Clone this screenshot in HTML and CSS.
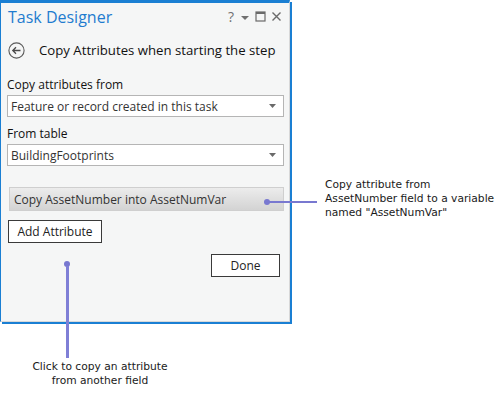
FILE: index.html
```html
<!DOCTYPE html>
<html>
<head>
<meta charset="utf-8">
<link rel="stylesheet" href="styles.css">
</head>
<body>
<div class="canvas">
  <div class="panel">
    <div class="titlebar">
      <span class="title">Task Designer</span>
      <div class="win-icons">
        <span class="help">?</span>
        <svg width="10" height="10" viewBox="0 0 10 10"><path d="M1 4 L9 4 L5 8 Z" fill="#707070"/></svg>
        <svg width="11" height="11" viewBox="0 0 11 11"><rect x="1" y="1" width="9" height="9" fill="none" stroke="#6a6a6a" stroke-width="1.2"/><rect x="1" y="1" width="9" height="2" fill="#6a6a6a"/></svg>
        <svg width="11" height="11" viewBox="0 0 11 11"><path d="M1.5 1.5 L9.5 9.5 M9.5 1.5 L1.5 9.5" stroke="#6a6a6a" stroke-width="1.4"/></svg>
      </div>
    </div>
    <div class="header">
      <svg class="back" width="17" height="17" viewBox="0 0 17 17"><circle cx="8.5" cy="8.5" r="7.6" fill="none" stroke="#5a5a5a" stroke-width="1.1"/><path d="M12.5 8.5 H5 M8 5.3 L4.8 8.5 L8 11.7" fill="none" stroke="#4a4a4a" stroke-width="1.3"/></svg>
      <span class="heading">Copy Attributes when starting the step</span>
    </div>
    <div class="field">
      <div class="label">Copy attributes from</div>
      <div class="select"><span>Feature or record created in this task</span><svg width="7" height="4" viewBox="0 0 7 4"><path d="M0 0 H7 L3.5 4 Z" fill="#6a6a6a"/></svg></div>
    </div>
    <div class="field second">
      <div class="label">From table</div>
      <div class="select"><span>BuildingFootprints</span><svg width="7" height="4" viewBox="0 0 7 4"><path d="M0 0 H7 L3.5 4 Z" fill="#6a6a6a"/></svg></div>
    </div>
    <div class="attr-row">Copy AssetNumber into AssetNumVar</div>
    <div class="btn-row"><button class="btn add">Add Attribute</button></div>
    <div class="done-row"><button class="btn done">Done</button></div>
  </div>

  <div class="callout-h"><span class="dot"></span><span class="line"></span></div>
  <div class="note note-right">Copy attribute from<br>AssetNumber field to a variable<br>named "AssetNumVar"</div>

  <div class="callout-v"><span class="dot"></span><span class="line"></span></div>
  <div class="note note-bottom">Click to copy an attribute<br>from another field</div>
</div>
</body>
</html>
```
FILE: styles.css
```css
html, body {
  margin: 0;
  padding: 0;
  background: #ffffff;
}
body {
  font-family: "Open Sans", "Noto Sans", sans-serif;
  color: #111;
}
.canvas {
  position: relative;
  width: 501px;
  height: 401px;
}
.panel {
  box-sizing: border-box;
  width: 290px;
  height: 322px;
  background: #f5f6f6;
  border-top: 3px solid #1a7fd3;
  border-left: 1px solid #1a7fd3;
  border-right: 1px solid #d8d8d8;
  border-bottom: 1px solid #d8d8d8;
  box-shadow: 2px 2px 0 0 #1a7fd3;
  padding: 0 6px 0 6px;
  display: flex;
  flex-direction: column;
}
.titlebar {
  height: 27px;
  display: flex;
  align-items: center;
  justify-content: space-between;
}
.title {
  font-size: 16px;
  color: #1f7ccf;
  padding-left: 1px;
}
.win-icons {
  display: flex;
  align-items: center;
  gap: 5px;
  padding-right: 1px;
}
.help {
  font-size: 14px;
  color: #707070;
  margin-right: 1px;
}
.header {
  display: flex;
  align-items: center;
  height: 40px;
}
.back {
  margin-left: 1px;
  margin-right: 14px;
}
.heading {
  font-size: 13.2px;
  color: #111;
}
.field {
  display: flex;
  flex-direction: column;
}
.label {
  font-size: 12px;
  height: 19px;
  line-height: 18px;
  margin-top: 6px;
  color: #111;
}
.second .label {
  margin-top: 8px;
}
.select {
  box-sizing: border-box;
  height: 22px;
  width: 277px;
  border: 1px solid #b5b5b5;
  background: #ffffff;
  display: flex;
  align-items: center;
  justify-content: space-between;
  padding: 0 7px 0 3px;
  font-size: 12px;
  color: #333;
}
.attr-row {
  box-sizing: border-box;
  margin-top: 21px;
  margin-left: 2px;
  height: 24px;
  width: 275px;
  border: 1px solid #cfcfcf;
  background: linear-gradient(#ececec, #d3d3d3);
  font-size: 12px;
  color: #333;
  display: flex;
  align-items: center;
  padding-left: 4px;
}
.btn-row {
  margin-top: 9px;
  display: flex;
}
.btn {
  box-sizing: border-box;
  font-family: inherit;
  font-size: 12px;
  color: #222;
  background: #ffffff;
  border: 1px solid #3a3a3a;
  padding: 0;
  height: 23px;
  margin: 0;
}
.add {
  margin-left: 1px;
  width: 94px;
}
.done-row {
  display: flex;
  justify-content: flex-end;
  margin-top: 11px;
  padding-right: 3px;
}
.done {
  width: 69px;
}
.callout-h {
  position: absolute;
  left: 264px;
  top: 199px;
  display: flex;
  align-items: center;
}
.callout-h .dot, .callout-v .dot {
  width: 6px;
  height: 6px;
  border-radius: 50%;
  background: #7878d0;
}
.callout-h .line {
  width: 48px;
  height: 2px;
  background: #7878d0;
  margin-left: -1px;
}
.callout-v {
  position: absolute;
  left: 64px;
  top: 261px;
  display: flex;
  flex-direction: column;
  align-items: center;
}
.callout-v .line {
  width: 3px;
  height: 92px;
  background: #7f7fd6;
  margin-top: -1px;
}
.note {
  position: absolute;
  font-family: "DejaVu Sans", sans-serif;
  font-size: 10.7px;
  line-height: 14px;
  color: #1a1a1a;
}
.note-right {
  left: 325px;
  top: 178px;
}
.note-bottom {
  left: 10px;
  width: 180px;
  top: 360px;
  text-align: center;
}
```
